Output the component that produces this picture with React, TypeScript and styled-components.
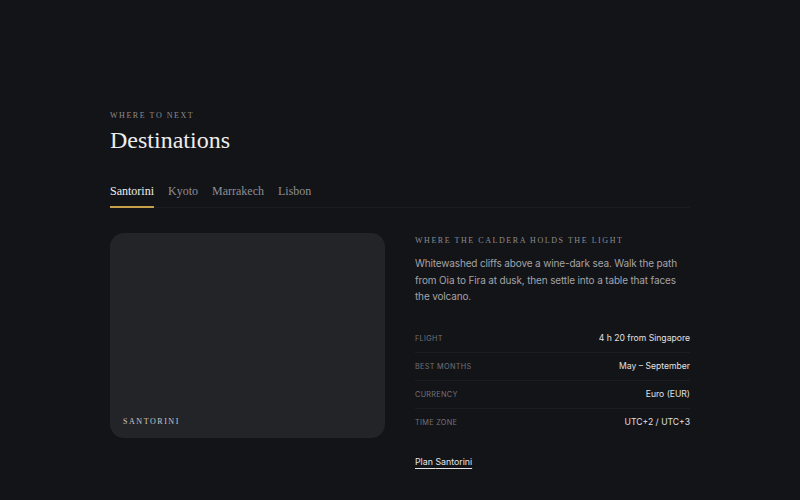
import React, {FC, useState} from 'react';
import styled, {createGlobalStyle} from "styled-components";

const GlobalStyle = createGlobalStyle`
  html, body {
    margin: 0;
    padding: 0;
    background: #131417;
  }
`;

const Page = styled.div`
  min-height: 500px;
  background: #131417;
  padding: 111px 110px 0 110px;
  box-sizing: border-box;
  font-family: Inter, "Noto Sans", sans-serif;
`;

const Eyebrow = styled.div`
  font-family: "Liberation Serif", serif;
  font-size: 8px;
  letter-spacing: 1.55px;
  color: #8b8b90;
  text-transform: uppercase;
`;

const Title = styled.h1`
  margin: 7px 0 0 0;
  font-family: "Liberation Serif", serif;
  font-weight: 400;
  font-size: 24px;
  color: #ededee;
`;

const Tabs = styled.div`
  display: flex;
  gap: 14px;
  margin-top: 30px;
  border-bottom: 1px solid #1b1c1f;
`;

const Tab = styled.button<{ $active: boolean }>`
  background: none;
  border: none;
  padding: 0 0 7px 0;
  margin-bottom: -1px;
  font-family: "Liberation Serif", serif;
  font-size: 12px;
  color: ${p => p.$active ? '#ededee' : '#8e8e93'};
  border-bottom: 2px solid ${p => p.$active ? '#c9a04a' : 'transparent'};
  cursor: pointer;
`;

const Body = styled.div`
  display: grid;
  grid-template-columns: 275px 275px;
  gap: 30px;
  margin-top: 25px;
`;

const Picture = styled.div`
  height: 205px;
  border-radius: 14px;
  background: #232428;
  display: flex;
  align-items: flex-end;
  padding: 0 0 12px 13px;
  box-sizing: border-box;
`;

const PictureLabel = styled.span`
  font-family: "Liberation Serif", serif;
  font-size: 8px;
  letter-spacing: 1.55px;
  color: #c9c9cc;
`;

const Info = styled.div`
  display: flex;
  flex-direction: column;
  padding-top: 3px;
`;

const Lede = styled.p`
  margin: 10px 0 20px 0;
  font-size: 10px;
  letter-spacing: -0.15px;
  line-height: 16.5px;
  color: #a3a3a9;
`;

const Facts = styled.dl`
  margin: 0;
`;

const Fact = styled.div`
  display: flex;
  justify-content: space-between;
  align-items: center;
  height: 27px;
  border-bottom: 1px solid #1c1d20;
  &:last-child {
    border-bottom: none;
  }
`;

const FactLabel = styled.dt`
  font-size: 7.3px;
  letter-spacing: 0.3px;
  color: #727278;
  text-transform: uppercase;
`;

const FactValue = styled.dd`
  margin: 0;
  font-size: 8.6px;
  color: #e0e0e3;
`;

const PlanLink = styled.a`
  margin-top: 20px;
  align-self: flex-start;
  font-size: 8.8px;
  color: #e4e4e7;
  text-decoration: underline;
  text-underline-offset: 3px;
  cursor: pointer;
`;

const places = [
    {
        name: 'Santorini',
        tagline: 'Where the caldera holds the light',
        text: 'Whitewashed cliffs above a wine-dark sea. Walk the path from Oia to Fira at dusk, then settle into a table that faces the volcano.',
        facts: [
            ['Flight', '4 h 20 from Singapore'],
            ['Best months', 'May – September'],
            ['Currency', 'Euro (EUR)'],
            ['Time zone', 'UTC+2 / UTC+3'],
        ],
    },
    {name: 'Kyoto', tagline: 'Temples in the morning mist', text: 'Moss gardens, wooden machiya and lantern-lit alleys in Gion.', facts: [['Flight', '6 h 40 from Singapore'], ['Best months', 'March – May'], ['Currency', 'Yen (JPY)'], ['Time zone', 'UTC+9']]},
    {name: 'Marrakech', tagline: 'Spice, dust and rose-red walls', text: 'Lose yourself in the souks, then climb to a rooftop for mint tea.', facts: [['Flight', '15 h from Singapore'], ['Best months', 'October – April'], ['Currency', 'Dirham (MAD)'], ['Time zone', 'UTC+1']]},
    {name: 'Lisbon', tagline: 'Seven hills by the Tagus', text: 'Trams rattle up cobbled streets to miradouros over terracotta roofs.', facts: [['Flight', '16 h from Singapore'], ['Best months', 'April – October'], ['Currency', 'Euro (EUR)'], ['Time zone', 'UTC+0 / UTC+1']]},
];

const App: FC = () => {
    const [active, setActive] = useState(0);
    const place = places[active];

    return <>
        <GlobalStyle/>
        <Page>
            <Eyebrow>Where to next</Eyebrow>
            <Title>Destinations</Title>
            <Tabs>
                {places.map((p, i) =>
                    <Tab key={p.name} $active={i === active} onClick={() => setActive(i)}>{p.name}</Tab>
                )}
            </Tabs>
            <Body>
                <Picture>
                    <PictureLabel>{place.name.toUpperCase()}</PictureLabel>
                </Picture>
                <Info>
                    <Eyebrow>{place.tagline}</Eyebrow>
                    <Lede>{place.text}</Lede>
                    <Facts>
                        {place.facts.map(([label, value]) =>
                            <Fact key={label}>
                                <FactLabel>{label}</FactLabel>
                                <FactValue>{value}</FactValue>
                            </Fact>
                        )}
                    </Facts>
                    <PlanLink>Plan {place.name}</PlanLink>
                </Info>
            </Body>
        </Page>
    </>;
};

export default App;
